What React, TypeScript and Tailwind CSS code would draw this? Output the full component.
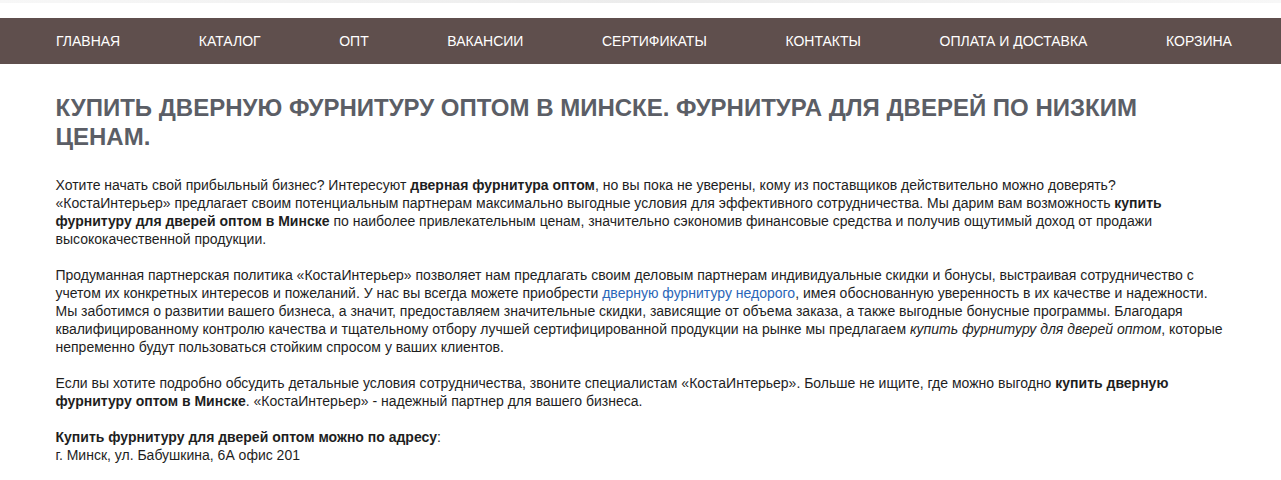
const navItems = [
  "ГЛАВНАЯ",
  "КАТАЛОГ",
  "ОПТ",
  "ВАКАНСИИ",
  "СЕРТИФИКАТЫ",
  "КОНТАКТЫ",
  "ОПЛАТА И ДОСТАВКА",
  "КОРЗИНА",
];

export default function App() {
  return (
    <div className="min-h-screen bg-white font-['Liberation_Sans',Arial,sans-serif]">
      <div className="h-[3px] bg-gradient-to-r from-[#f7f7f7] via-[#ececec] to-[#f7f7f7]" />
      <div className="h-[15px]" />
      {/* Top menu */}
      <nav className="h-[46px] bg-[#5f4f4d]">
        <ul className="h-full flex items-center justify-between pl-[56px] pr-[49px]">
          {navItems.map((item) => (
            <li key={item}>
              <a href="#" className="text-[14px] text-white leading-none">
                {item}
              </a>
            </li>
          ))}
        </ul>
      </nav>

      <main className="w-[1170px] mx-auto pt-[30px] text-[14px] leading-[18px] text-[#1e1e1e]">
        <h1 className="text-[24px] leading-[1.2] font-bold text-[#5b5e66] mb-[24px]">
          КУПИТЬ ДВЕРНУЮ ФУРНИТУРУ ОПТОМ В МИНСКЕ. ФУРНИТУРА ДЛЯ ДВЕРЕЙ ПО НИЗКИМ ЦЕНАМ.
        </h1>

        <p className="mb-[18px]">
          Хотите начать свой прибыльный бизнес? Интересуют <b>дверная фурнитура оптом</b>, но вы пока не
          уверены, кому из поставщиков действительно можно доверять? «КостаИнтерьер» предлагает своим
          потенциальным партнерам максимально выгодные условия для эффективного сотрудничества. Мы дарим вам
          возможность <b>купить фурнитуру для дверей оптом в Минске</b> по наиболее привлекательным ценам,
          значительно сэкономив финансовые средства и получив ощутимый доход от продажи высококачественной
          продукции.
        </p>

        <p className="mb-[18px]">
          Продуманная партнерская политика «КостаИнтерьер» позволяет нам предлагать своим деловым партнерам
          индивидуальные скидки и бонусы, выстраивая сотрудничество с учетом их конкретных интересов и
          пожеланий. У нас вы всегда можете приобрести{" "}
          <a href="#" className="text-[#2a66b8]">
            дверную фурнитуру недорого
          </a>
          , имея обоснованную уверенность в их качестве и надежности. Мы заботимся о развитии вашего бизнеса, а
          значит, предоставляем значительные скидки, зависящие от объема заказа, а также выгодные бонусные
          программы. Благодаря квалифицированному контролю качества и тщательному отбору лучшей
          сертифицированной продукции на рынке мы предлагаем <i>купить фурнитуру для дверей оптом</i>, которые
          непременно будут пользоваться стойким спросом у ваших клиентов.
        </p>

        <p className="mb-[18px]">
          Если вы хотите подробно обсудить детальные условия сотрудничества, звоните специалистам
          «КостаИнтерьер». Больше не ищите, где можно выгодно <b>купить дверную фурнитуру оптом в Минске</b>.
          «КостаИнтерьер» - надежный партнер для вашего бизнеса.
        </p>

        <p>
          <b>Купить фурнитуру для дверей оптом можно по адресу</b>:
          <br />
          г. Минск, ул. Бабушкина, 6А офис 201
        </p>
      </main>
    </div>
  );
}
